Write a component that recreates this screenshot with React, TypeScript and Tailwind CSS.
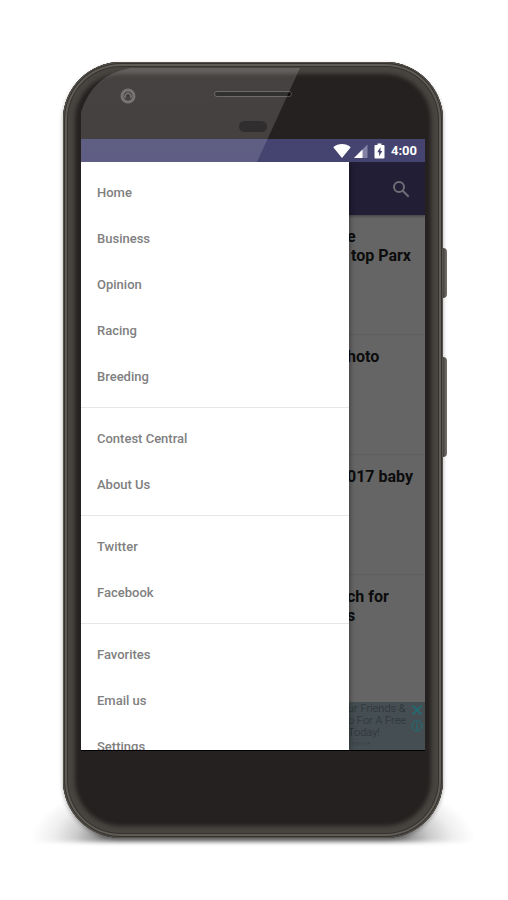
import React from 'react';

const MENU_GROUPS = [
  ['Home', 'Business', 'Opinion', 'Racing', 'Breeding'],
  ['Contest Central', 'About Us'],
  ['Twitter', 'Facebook'],
  ['Favorites', 'Email us', 'Settings'],
];

const HEADLINES = [
  ['e', '\u00a0top Parx'],
  ['hoto'],
  ['017 baby'],
  ['ch for', 's'],
];

const StatusBar: React.FC = () => (
  <div className="flex h-[23px] items-center justify-end gap-1.5 bg-[#45436f] pr-2 text-white">
    <div className="flex gap-0.5">
      <svg className="h-4 w-[18px]" viewBox="0 0 18 16" fill="currentColor">
        <path d="M9 15 0.3 4.2C2.8 2 5.8 1 9 1s6.2 1 8.7 3.2z" />
      </svg>
      <svg className="h-4 w-[15px]" viewBox="0 0 15 16">
        <path d="M14.5 1.5v13.5H1z" fill="#8583a5" />
        <path d="M9.5 6.5v8.5H1z" fill="#fff" />
      </svg>
    </div>
    <svg className="h-4 w-[11px]" viewBox="0 0 11 16" fill="currentColor">
      <path fillRule="evenodd" d="M3.5 0.5h4v1.5H9.5q1 0 1 1v11.5q0 1-1 1h-8q-1 0-1-1V3q0-1 1-1h2zM6.5 4.2 3.2 9.3h1.9v4l3.2-5.3H6.5z" />
    </svg>
    <span className="text-[13px] leading-4 font-bold">4:00</span>
  </div>
);

const Drawer: React.FC = () => (
  <nav className="absolute inset-y-0 left-0 w-[268px] overflow-hidden bg-white shadow-[0_0_6px_#0008]">
    {MENU_GROUPS.map((group, i) => (
      <ul key={i} className="border-b border-[#e6e6e6] pt-2 pb-[7px] last:border-b-0">
        {group.map((item) => (
          <li key={item}>
            <a href="#" className="flex h-[46px] items-center px-4 text-[13px] font-medium text-[#808080]">
              {item}
            </a>
          </li>
        ))}
      </ul>
    ))}
  </nav>
);

const AdBanner: React.FC = () => (
  <div className="flex h-12 justify-between bg-[#454e52] pr-0.5 pl-[267px] text-[#2b3235]">
    <div className="pt-px text-[11px] leading-3 font-light whitespace-nowrap">
      <p>ur Friends &amp;</p>
      <p>o For A Free</p>
      <p>Today!</p>
      <p className="pl-1 text-[8px] leading-[10px] text-[#363f43]">more</p>
    </div>
    <div className="flex flex-col gap-1 pt-0.5 text-[#1c7078]">
      <button aria-label="Close ad" className="block">
        <svg className="size-3" viewBox="0 0 12 12" stroke="currentColor" strokeWidth="1.5" fill="none">
          <path d="M1.5 1.5l9 9M10.5 1.5l-9 9" />
        </svg>
      </button>
      <button aria-label="Ad info" className="block">
        <svg className="size-3" viewBox="0 0 12 12" stroke="currentColor" fill="none">
          <circle cx="6" cy="6" r="5" />
          <path d="M6 5v4M6 2.8v1.2" strokeWidth="1.3" />
        </svg>
      </button>
    </div>
  </div>
);

const AppScreen: React.FC = () => (
  <div className="relative flex h-[588px] flex-col overflow-hidden bg-[#656565]">
    <header className="flex h-[53px] items-center justify-end bg-[#211e35] pr-3.5 shadow-[0_1px_3px_#0006]">
      <button aria-label="Search" className="text-[#6f6d76]">
        <svg className="size-5" viewBox="0 0 20 20" fill="none" stroke="currentColor" strokeWidth="2">
          <circle cx="8" cy="8" r="5" />
          <path d="M11.7 11.7l6 6" />
        </svg>
      </button>
    </header>
    <div className="flex-1">
      {HEADLINES.map((lines, i) => (
        <article key={i} className="h-[120px] border-b border-[#5e5e5e] pt-3 pl-[266px] last:border-b-0">
          <h2 className="text-base leading-[19px] font-bold whitespace-nowrap text-[#0c0c0c]">
            {lines.map((line) => (
              <span key={line} className="block">{line}</span>
            ))}
          </h2>
        </article>
      ))}
    </div>
    <AdBanner />
    <Drawer />
  </div>
);

const Phone: React.FC = () => (
  <div className="relative w-full max-w-[380px]">
    {/* floor shadow */}
    <div className="absolute -inset-x-8 -bottom-1 h-20 bg-[radial-gradient(50%_100%_at_50%_100%,#0007_68%,#0003_80%,#0001_90%,transparent)] blur-[2px]" />

    {/* power and volume keys */}
    <div className="absolute top-[186px] -right-1 h-[50px] w-2 rounded-r-sm bg-gradient-to-r from-[#2f2d2a] to-[#77736c]" />
    <div className="absolute top-[295px] -right-1 h-[100px] w-2 rounded-r-sm bg-gradient-to-r from-[#2f2d2a] to-[#77736c]" />

    <div className="relative rounded-[58px] bg-[#252120] px-[18px] shadow-[inset_0_0_0_1px_#57534d,inset_0_0_0_2px_#34312e,inset_0_0_0_4px_#5f5b55,inset_0_0_0_5px_#35322f,inset_0_0_4px_12px_#484541,0_2px_4px_#0005]">
      <div className="flex h-[77px] flex-col items-center gap-6 pt-[29px]">
        <div className="h-1.5 w-[78px] rounded-full border border-[#54514d] bg-[#0f0e0d]" />
        <div className="h-[11px] w-7 rounded-full bg-[#0d0b0b]" />
      </div>
      <div className="border-b border-black bg-black">
        <StatusBar />
        <AppScreen />
      </div>
      <div className="h-[87px]" />

      {/* glass reflection */}
      <svg className="pointer-events-none absolute top-1.5 left-1.5 h-[94px] w-[232px]" viewBox="0 0 232 94">
        <defs>
          <linearGradient id="glare" x1="0" y1="0" x2="0" y2="1">
            <stop offset="0" stopColor="#fff" stopOpacity="0.15" />
            <stop offset="1" stopColor="#fff" stopOpacity="0.14" />
          </linearGradient>
        </defs>
        <path d="M231 0 188 94H12V44Q24 6 62 0z" fill="url(#glare)" />
        <circle cx="59" cy="28" r="7.5" fill="#777573" />
        <circle cx="59" cy="28" r="4.5" fill="#454341" />
        <path d="M56.5 30a3 3 0 1 1 5 0" stroke="#807e7b" strokeWidth="1.2" fill="none" />
      </svg>
    </div>
  </div>
);

const App: React.FC = () => {
  return (
    <main className="flex min-h-screen items-start justify-center bg-white px-4 pt-[62px] pr-[18px] pb-[60px] font-['Roboto',sans-serif]">
      <Phone />
    </main>
  );
};

export default App;
